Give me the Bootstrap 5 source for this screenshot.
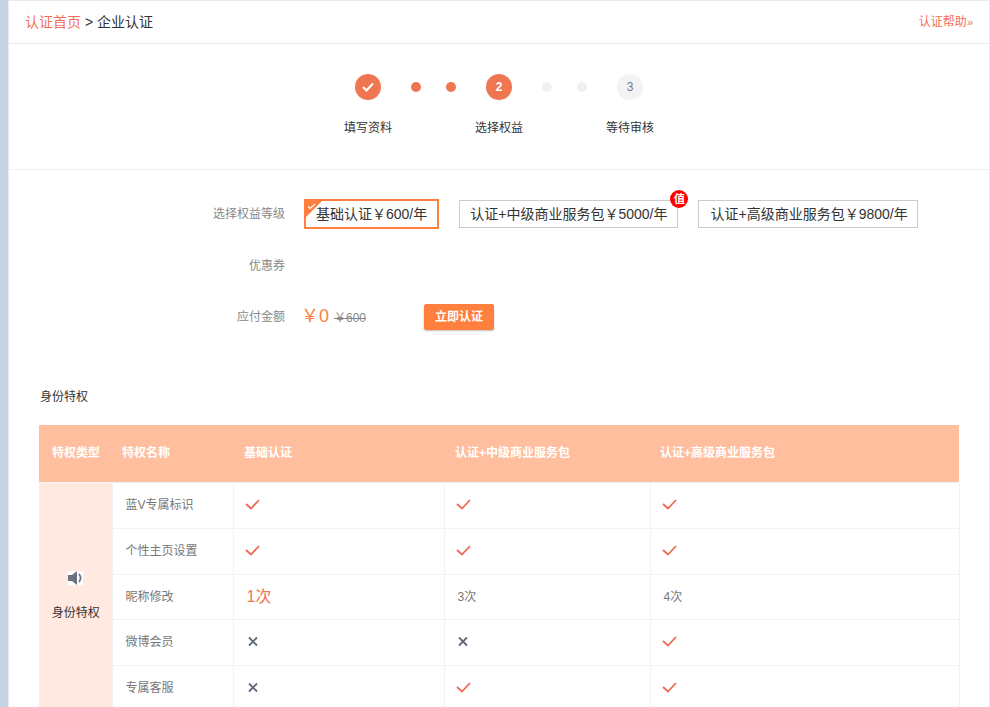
<!DOCTYPE html>
<html lang="zh-CN">
<head>
<meta charset="utf-8">
<title>企业认证</title>
<link href="https://cdn.jsdelivr.net/npm/bootstrap@5.3.0/dist/css/bootstrap.min.css" rel="stylesheet">
<style>
html,body{height:707px;overflow:hidden}
body{background:#c5d3e2;font-family:"Liberation Sans","Noto Sans CJK SC",sans-serif;font-size:12px;color:#333}
.shell{margin-left:8px;background:#fff;border:1px solid #e8ebf0;border-bottom:0;min-height:707px}
.head-bar{height:43px;border-bottom:1px solid #e8e8e8;padding:0 16px 0 16px;font-size:14px}
.crumb-link{color:#f5705a;text-decoration:none}
.help-link{color:#f5705a;text-decoration:none;font-size:12px}
.help-arrow{font-size:11px}
.step-wrap{height:126px;border-bottom:1px solid #f0f0f0;padding-top:30px}
.step-track{height:26px;gap:30px}
.step-circle{width:26px;height:26px;border-radius:50%;background:#ee7751;color:#fff;font-weight:700;font-size:12px}
.step-circle.todo{background:#f3f3f5;color:#777;font-weight:400}
.step-dots{gap:25px}
.step-dot{width:10px;height:10px;border-radius:50%;background:#ee7751}
.step-dot.todo{background:#f0f0f3}
.step-names{margin-top:19px}
.step-name{width:131px;text-align:center;line-height:18px}
.form-area{padding-top:29px}
.lab{width:276px;margin-right:19px;text-align:right;color:#888;flex:none}
.plan-row{height:30px}
.plan{height:28px;padding:0 10px;border:1px solid #ccc;font-size:14px;color:#333;margin-right:20px;white-space:nowrap}
.plan.last-plan{padding:0 9px 0 11px}
.plan.on{height:30px;border:2px solid #ff7f3f;padding:0 10px}
.corner{top:-1px;left:-1px;width:0;height:0;border-top:18px solid #ff7f3f;border-right:18px solid transparent}
.corner-tick{top:2px;left:1px}
.val-badge{top:-11px;right:-11px;width:18px;height:18px;border-radius:50%;background:#f00;color:#fff;font-size:11px;font-weight:700;line-height:18px}
.coupon-row{height:30px;margin-top:22px}
.pay-row{height:26px;margin-top:23px}
.pay-now{width:123px;margin-left:-3px;padding-bottom:2px;flex:none;color:#ff7f3f;font-size:18px;white-space:nowrap}
.pay-old{color:#888;font-size:12px;text-decoration:line-through;margin-left:5px}
.pay-btn{--bs-btn-padding-x:0;--bs-btn-padding-y:0;--bs-btn-font-size:12px;--bs-btn-font-weight:700;--bs-btn-color:#fff;--bs-btn-bg:#ff7f3f;--bs-btn-border-color:#ff7f3f;--bs-btn-border-radius:2px;width:70px;height:26px;box-shadow:0 1px 2px rgba(0,0,0,.25)}
.sec-title{margin:58px 0 19px 31px;line-height:18px}
.perk-box{margin:0 30px}
.perk-table{table-layout:fixed;width:920px;margin:0;font-size:12px;color:#777;border-collapse:collapse}
.perk-table th{background:#ffbf9f;color:#fff;font-weight:700;height:57px;vertical-align:middle;padding:0 0 0 10px;border:0;border-bottom:1px solid #f2f2f2;box-shadow:none}
.perk-table th:first-child{padding-left:13px}
.perk-table th.wide-b{padding-left:11px}
.perk-table td{height:46px;padding:0 0 0 12px;vertical-align:middle;border:1px solid #f2f2f2;border-top:0;box-shadow:none;background:#fff;color:#777}
.perk-table td.perk-name{padding-left:13px}
.perk-table td.plan-b{padding-left:13px}
.perk-table tr.slim td{height:45px}
.perk-table td.kind{background:#ffe9e0;border:0;padding:0 0 3px 1px;text-align:center;color:#333}
.kind-text{display:block;margin-top:18px}
.once{font-size:16px;color:#ee7751;margin-left:1px}
.ok{display:block;margin-top:-1px;margin-bottom:1px;margin-left:-1px}
.plan-b .ok{margin-left:-2px}
.nope{display:block;margin-top:-1px;margin-bottom:1px}
.plan-b .nope{margin-left:-2px}
</style>
</head>
<body>
<div class="shell">
  <div class="head-bar d-flex align-items-center justify-content-between">
    <div><a class="crumb-link" href="#">认证首页</a> &gt; 企业认证</div>
    <a class="help-link" href="#">认证帮助<span class="help-arrow">»</span></a>
  </div>
  <div class="step-wrap">
    <div class="step-track d-flex justify-content-center align-items-center">
      <div class="step-circle d-flex align-items-center justify-content-center">
        <svg width="12" height="10" viewBox="0 0 12 10"><path d="M1 5l3.500 3.500L11 1.500" fill="none" stroke="#fff" stroke-width="2"/></svg>
      </div>
      <div class="step-dots d-flex"><span class="step-dot"></span><span class="step-dot"></span></div>
      <div class="step-circle d-flex align-items-center justify-content-center">2</div>
      <div class="step-dots d-flex"><span class="step-dot todo"></span><span class="step-dot todo"></span></div>
      <div class="step-circle todo d-flex align-items-center justify-content-center">3</div>
    </div>
    <div class="step-names d-flex justify-content-center">
      <div class="step-name">填写资料</div><div class="step-name">选择权益</div><div class="step-name">等待审核</div>
    </div>
  </div>
  <div class="form-area">
    <div class="plan-row d-flex align-items-center">
      <div class="lab">选择权益等级</div>
      <div class="plan on position-relative d-flex align-items-center">
        <span class="corner position-absolute"></span>
        <svg class="corner-tick position-absolute" width="9" height="7" viewBox="0 0 9 7"><path d="M1 3.500l2.200 2L8 1" fill="none" stroke="#fff" stroke-width="1.200"/></svg>
        基础认证￥600/年
      </div>
      <div class="plan position-relative d-flex align-items-center">认证+中级商业服务包￥5000/年
        <span class="val-badge position-absolute text-center">值</span>
      </div>
      <div class="plan last-plan d-flex align-items-center">认证+高级商业服务包￥9800/年</div>
    </div>
    <div class="coupon-row d-flex align-items-center"><div class="lab">优惠券</div></div>
    <div class="pay-row d-flex align-items-center">
      <div class="lab">应付金额</div>
      <div class="pay-now">￥0<span class="pay-old">￥600</span></div>
      <button type="button" class="btn pay-btn">立即认证</button>
    </div>
  </div>
  <div class="sec-title">身份特权</div>
  <div class="perk-box">
    <table class="table perk-table">
      <colgroup><col style="width:73px"><col style="width:121px"><col style="width:211px"><col style="width:206px"><col style="width:309px"></colgroup>
      <thead><tr><th>特权类型</th><th>特权名称</th><th class="wide-b">基础认证</th><th class="wide-b">认证+中级商业服务包</th><th>认证+高级商业服务包</th></tr></thead>
      <tbody>
        <tr>
          <td class="kind" rowspan="5">
            <svg width="15" height="14" viewBox="0 0 15 14"><rect width="15" height="14" fill="#fff"/><path d="M0 4h4l5-4v14L4 10H0z" fill="#6b7280"/><path d="M11 3c2 2.500 2 5.500 0 8" fill="none" stroke="#6b7280" stroke-width="1.800"/></svg>
            <span class="kind-text">身份特权</span>
          </td>
          <td class="perk-name">蓝V专属标识</td>
          <td><svg class="ok" width="15" height="11" viewBox="0 0 15 11"><path d="M1 5l5 4.500L14 1" fill="none" stroke="#ee6a55" stroke-width="1.800"/></svg></td>
          <td class="plan-b"><svg class="ok" width="15" height="11" viewBox="0 0 15 11"><path d="M1 5l5 4.500L14 1" fill="none" stroke="#ee6a55" stroke-width="1.800"/></svg></td>
          <td class="plan-b"><svg class="ok" width="15" height="11" viewBox="0 0 15 11"><path d="M1 5l5 4.500L14 1" fill="none" stroke="#ee6a55" stroke-width="1.800"/></svg></td>
        </tr>
        <tr>
          <td class="perk-name">个性主页设置</td>
          <td><svg class="ok" width="15" height="11" viewBox="0 0 15 11"><path d="M1 5l5 4.500L14 1" fill="none" stroke="#ee6a55" stroke-width="1.800"/></svg></td>
          <td class="plan-b"><svg class="ok" width="15" height="11" viewBox="0 0 15 11"><path d="M1 5l5 4.500L14 1" fill="none" stroke="#ee6a55" stroke-width="1.800"/></svg></td>
          <td class="plan-b"><svg class="ok" width="15" height="11" viewBox="0 0 15 11"><path d="M1 5l5 4.500L14 1" fill="none" stroke="#ee6a55" stroke-width="1.800"/></svg></td>
        </tr>
        <tr class="slim">
          <td class="perk-name">昵称修改</td><td><span class="once">1次</span></td><td class="plan-b">3次</td><td class="plan-b">4次</td>
        </tr>
        <tr>
          <td class="perk-name">微博会员</td>
          <td><svg class="nope" width="15" height="11" viewBox="0 0 15 11"><path d="M3 1.500l8 8M11 1.500l-8 8" fill="none" stroke="#5f6b7a" stroke-width="1.800"/></svg></td>
          <td class="plan-b"><svg class="nope" width="15" height="11" viewBox="0 0 15 11"><path d="M3 1.500l8 8M11 1.500l-8 8" fill="none" stroke="#5f6b7a" stroke-width="1.800"/></svg></td>
          <td class="plan-b"><svg class="ok" width="15" height="11" viewBox="0 0 15 11"><path d="M1 5l5 4.500L14 1" fill="none" stroke="#ee6a55" stroke-width="1.800"/></svg></td>
        </tr>
        <tr>
          <td class="perk-name">专属客服</td>
          <td><svg class="nope" width="15" height="11" viewBox="0 0 15 11"><path d="M3 1.500l8 8M11 1.500l-8 8" fill="none" stroke="#5f6b7a" stroke-width="1.800"/></svg></td>
          <td class="plan-b"><svg class="ok" width="15" height="11" viewBox="0 0 15 11"><path d="M1 5l5 4.500L14 1" fill="none" stroke="#ee6a55" stroke-width="1.800"/></svg></td>
          <td class="plan-b"><svg class="ok" width="15" height="11" viewBox="0 0 15 11"><path d="M1 5l5 4.500L14 1" fill="none" stroke="#ee6a55" stroke-width="1.800"/></svg></td>
        </tr>
      </tbody>
    </table>
  </div>
</div>
<script src="https://cdn.jsdelivr.net/npm/bootstrap@5.3.0/dist/js/bootstrap.bundle.min.js"></script>
</body>
</html>
